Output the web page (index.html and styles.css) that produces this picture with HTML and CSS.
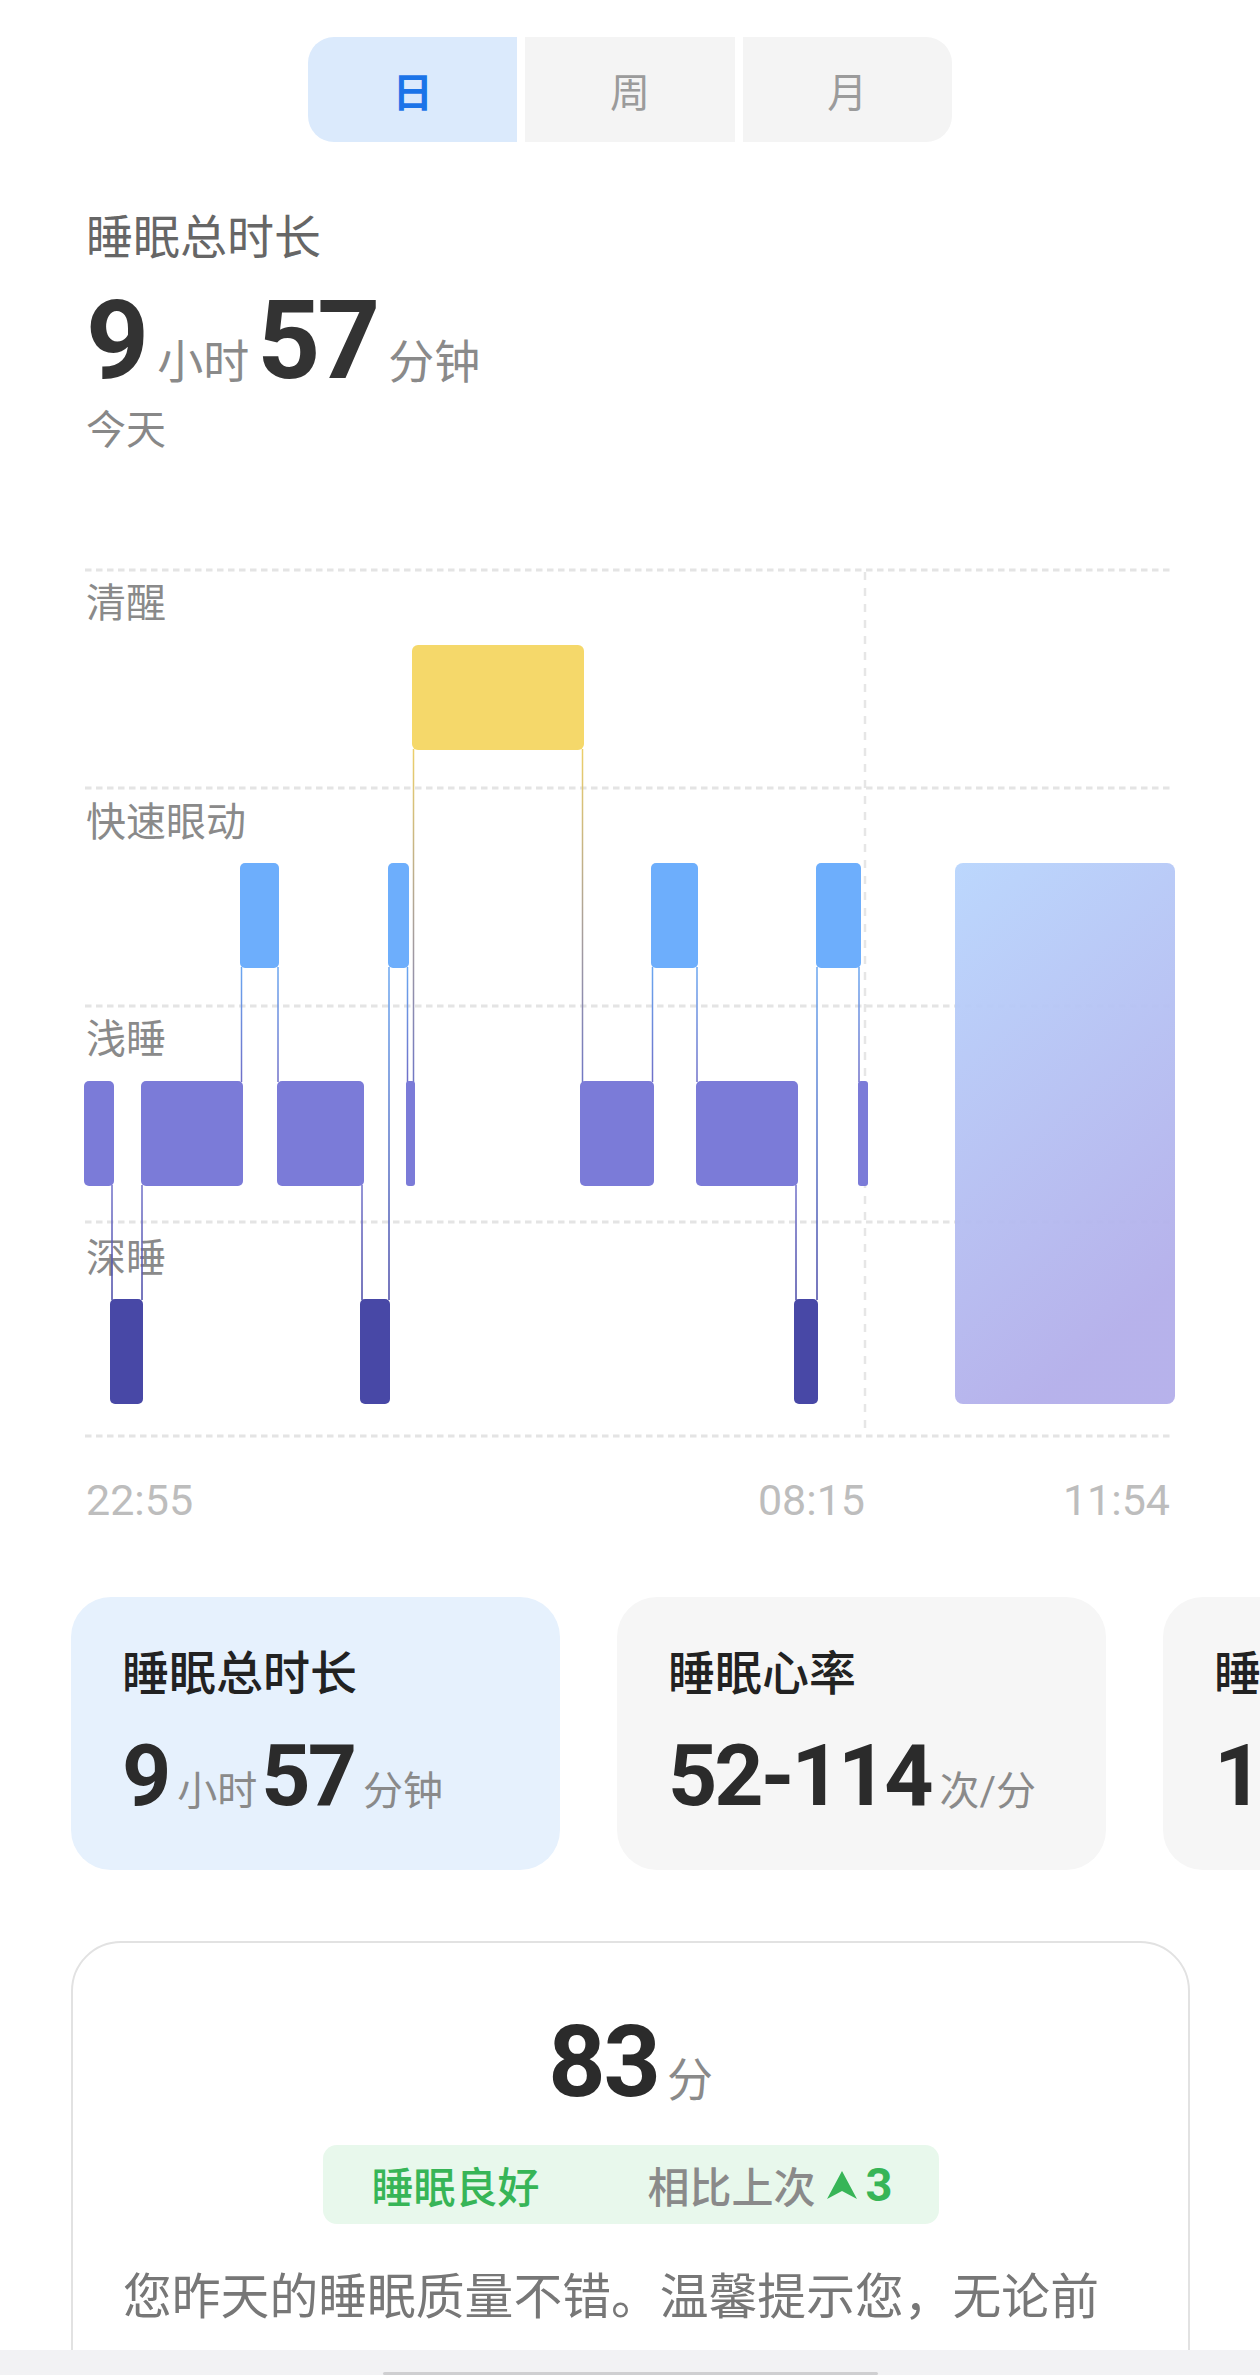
FILE: index.html
```html
<!DOCTYPE html>
<html lang="zh-CN">
<head>
<meta charset="utf-8">
<title>睡眠</title>
<link rel="stylesheet" href="styles.css">
</head>
<body>
<div class="page">
  <div class="tabs">
    <div class="tab active">日</div>
    <div class="tab">周</div>
    <div class="tab">月</div>
  </div>

  <section class="summary">
    <div class="sum-title">睡眠总时长</div>
    <div class="sum-value"><span class="num">9</span><span class="unit">小时</span><span class="num">57</span><span class="unit">分钟</span></div>
    <div class="sum-date">今天</div>
  </section>

  <div class="chart">
    <svg class="chart-svg" width="1260" height="980" viewBox="0 560 1260 980" xmlns="http://www.w3.org/2000/svg">
      <defs>
        <linearGradient id="gAL" gradientUnits="userSpaceOnUse" x1="0" y1="751" x2="0" y2="1082">
          <stop offset="0" stop-color="#eccf6a"/><stop offset="1" stop-color="#7077c4"/>
        </linearGradient>
        <linearGradient id="gRL" gradientUnits="userSpaceOnUse" x1="0" y1="969" x2="0" y2="1082">
          <stop offset="0" stop-color="#6aa6f0"/><stop offset="1" stop-color="#6f6fc8"/>
        </linearGradient>
        <linearGradient id="gLD" gradientUnits="userSpaceOnUse" x1="0" y1="1187" x2="0" y2="1300">
          <stop offset="0" stop-color="#7070c8"/><stop offset="1" stop-color="#4848a6"/>
        </linearGradient>
        <linearGradient id="gRD" gradientUnits="userSpaceOnUse" x1="0" y1="969" x2="0" y2="1300">
          <stop offset="0" stop-color="#6aa6f0"/><stop offset="1" stop-color="#4848a6"/>
        </linearGradient>
        <linearGradient id="gBig" x1="0" y1="0" x2="0.35" y2="1">
          <stop offset="0" stop-color="#b8d5fd"/><stop offset="1" stop-color="#b3aeea"/>
        </linearGradient>
      </defs>

      <g class="grid">
        <line x1="85" y1="571" x2="1170" y2="571"/>
        <line x1="85" y1="789" x2="1170" y2="789"/>
        <line x1="85" y1="1007" x2="1170" y2="1007"/>
        <line x1="85" y1="1223" x2="1170" y2="1223"/>
        <line x1="85" y1="1437" x2="1170" y2="1437"/>
      </g>
      <line class="vline" x1="865" y1="573" x2="865" y2="1432"/>

      <g class="stage-label">
        <text x="86" y="618">清醒</text>
        <text x="86" y="837">快速眼动</text>
        <text x="86" y="1054">浅睡</text>
        <text x="86" y="1273">深睡</text>
      </g>

      <rect class="big" x="955" y="864" width="220" height="541" rx="8"/>

      <g class="conn">
        <line x1="112" y1="1186" x2="112" y2="1301" stroke="url(#gLD)"/>
        <line x1="142" y1="1186" x2="142" y2="1301" stroke="url(#gLD)"/>
        <line x1="241.5" y1="968" x2="241.5" y2="1083" stroke="url(#gRL)"/>
        <line x1="278" y1="968" x2="278" y2="1083" stroke="url(#gRL)"/>
        <line x1="362" y1="1186" x2="362" y2="1301" stroke="url(#gLD)"/>
        <line x1="389" y1="968" x2="389" y2="1301" stroke="url(#gRD)"/>
        <line x1="407.5" y1="968" x2="407.5" y2="1083" stroke="url(#gRL)"/>
        <line x1="413.5" y1="750" x2="413.5" y2="1083" stroke="url(#gAL)"/>
        <line x1="582.5" y1="750" x2="582.5" y2="1083" stroke="url(#gAL)"/>
        <line x1="652.5" y1="968" x2="652.5" y2="1083" stroke="url(#gRL)"/>
        <line x1="697" y1="968" x2="697" y2="1083" stroke="url(#gRL)"/>
        <line x1="796" y1="1186" x2="796" y2="1301" stroke="url(#gLD)"/>
        <line x1="817" y1="968" x2="817" y2="1301" stroke="url(#gRD)"/>
        <line x1="859" y1="968" x2="859" y2="1083" stroke="url(#gRL)"/>
      </g>

      <g class="awake">
        <rect x="412" y="646" width="172" height="105" rx="6"/>
      </g>
      <g class="rem">
        <rect x="240" y="864" width="39" height="105" rx="5"/>
        <rect x="388" y="864" width="21" height="105" rx="5"/>
        <rect x="651" y="864" width="47" height="105" rx="5"/>
        <rect x="816" y="864" width="45" height="105" rx="5"/>
      </g>
      <g class="light">
        <rect x="84" y="1082" width="30" height="105" rx="5"/>
        <rect x="141" y="1082" width="102" height="105" rx="5"/>
        <rect x="277" y="1082" width="87" height="105" rx="5"/>
        <rect x="406" y="1082" width="9" height="105" rx="3"/>
        <rect x="580" y="1082" width="74" height="105" rx="5"/>
        <rect x="696" y="1082" width="102" height="105" rx="5"/>
        <rect x="858" y="1082" width="10" height="105" rx="3"/>
      </g>
      <g class="deep">
        <rect x="110" y="1300" width="33" height="105" rx="5"/>
        <rect x="360" y="1300" width="30" height="105" rx="5"/>
        <rect x="794" y="1300" width="24" height="105" rx="5"/>
      </g>

      <g class="axis">
        <text x="86" y="1516">22:55</text>
        <text x="865" y="1516" text-anchor="end">08:15</text>
        <text x="1170" y="1516" text-anchor="end">11:54</text>
      </g>
    </svg>
  </div>

  <div class="cards">
    <div class="card card-blue">
      <div class="card-title">睡眠总时长</div>
      <div class="card-value"><span class="num">9</span><span class="unit">小时</span><span class="num">57</span><span class="unit">分钟</span></div>
    </div>
    <div class="card card-gray">
      <div class="card-title">睡眠心率</div>
      <div class="card-value"><span class="num">52-114</span><span class="unit">次/分</span></div>
    </div>
    <div class="card card-gray">
      <div class="card-title">睡眠呼吸率</div>
      <div class="card-value"><span class="num">11-16</span><span class="unit">次/分</span></div>
    </div>
  </div>

  <div class="score-card">
    <div class="score"><span class="score-num">83</span><span class="score-unit">分</span></div>
    <div class="badge">
      <span class="badge-good">睡眠良好</span>
      <span class="badge-cmp">相比上次</span>
      <svg class="arrow" width="32" height="30" viewBox="0 0 32 30"><path d="M16 1 L31 29 L16 21 L1 29 Z"/></svg>
      <span class="badge-num">3</span>
    </div>
    <p class="score-text">您昨天的睡眠质量不错。温馨提示您，无论前一天睡得如何，都请保持规律的作息时间，早睡早起。</p>
  </div>
</div>
<div class="navbar"><div class="handle"></div></div>
</body>
</html>
```

FILE: styles.css
```css
* { box-sizing: border-box; }
html, body {
  margin: 0;
  padding: 0;
  background: #ffffff;
}
body {
  width: 1260px;
  overflow: hidden;
  font-family: "Roboto", "Noto Sans CJK SC", sans-serif;
  color: #222;
}
.page {
  width: 1260px;
  padding-bottom: 200px;
}

/* tabs */
.tabs {
  width: 644px;
  height: 105px;
  margin: 37px auto 0;
  display: flex;
  gap: 8px;
  border-radius: 26px;
  overflow: hidden;
}
.tab {
  flex: 1;
  display: flex;
  align-items: center;
  justify-content: center;
  background: #f4f4f4;
  color: #9b9b9b;
  font-size: 40px;
  font-family: "Noto Sans CJK SC", sans-serif;
}
.tab.active {
  background: #dbeafc;
  color: #1b74e8;
  font-weight: 700;
}

/* summary */
.summary {
  padding: 68px 0 0 86px;
}
.sum-title {
  font-size: 47px;
  line-height: 56px;
  color: #666;
}
.sum-value {
  margin-top: 19px;
  font-size: 110px;
  line-height: 112px;
  height: 112px;
  color: #333;
}
.sum-value .num {
  font-weight: 700;
  letter-spacing: -3px;
}
.sum-value .unit {
  font-size: 46px;
  line-height: 1;
  color: #8a8a8a;
  margin: 0 8px 0 11px;
}
.sum-date {
  margin-top: 10px;
  font-size: 40px;
  line-height: 48px;
  color: #888;
}

/* chart */
.chart {
  margin-top: 104px;
  height: 980px;
}
.chart-svg {
  display: block;
}
.grid line {
  stroke: #e4e4e4;
  stroke-width: 3;
  stroke-dasharray: 6.5 4.5;
}
.vline {
  stroke: #e6e6e6;
  stroke-width: 2.5;
  stroke-dasharray: 8 8;
}
.stage-label text {
  font-size: 40px;
  fill: #8a8a8a;
  font-family: "Noto Sans CJK SC", sans-serif;
}
.axis text {
  font-size: 43px;
  fill: #bdbdbd;
  font-family: "Roboto", sans-serif;
}
.conn line {
  stroke-width: 1.5;
}
.awake rect { fill: #f5d86a; }
.rem rect { fill: #6daefc; }
.light rect { fill: #7b7bd8; }
.deep rect { fill: #4848a6; }
.big {
  fill: url(#gBig);
  opacity: 0.95;
}

/* cards */
.cards {
  margin-top: 58px;
  padding-left: 71px;
  display: flex;
  gap: 57px;
  overflow: hidden;
  width: 1260px;
}
.card {
  flex: 0 0 489px;
  height: 273px;
  border-radius: 40px;
  padding: 49px 0 0 51px;
}
.card-blue { background: #e6f1fd; }
.card-gray { background: #f6f6f6; }
.card-title {
  font-size: 47px;
  line-height: 56px;
  color: #222;
  font-weight: 500;
  white-space: nowrap;
}
.card-value {
  margin-top: 31px;
  font-size: 86px;
  line-height: 86px;
  height: 86px;
  color: #2b2b2b;
  white-space: nowrap;
}
.card-value .num {
  font-weight: 700;
  letter-spacing: -3px;
}
.card-value .unit {
  font-size: 40px;
  line-height: 1;
  color: #8a8a8a;
  margin: 0 4px 0 9px;
}

/* score card */
.score-card {
  margin: 71px 0 0 71px;
  width: 1119px;
  height: 600px;
  border: 2px solid #e2e2e2;
  border-radius: 50px;
  padding: 69px 48px 0 48px;
}
.score {
  text-align: center;
  font-size: 100px;
  line-height: 100px;
  height: 100px;
  color: #2b2b2b;
}
.score-num {
  font-weight: 700;
  letter-spacing: -2px;
}
.score-unit {
  font-size: 46px;
  line-height: 1;
  color: #8a8a8a;
  margin-left: 8px;
}
.badge {
  margin: 33px auto 0;
  width: 616px;
  height: 79px;
  background: #e8f8ec;
  border-radius: 14px;
  display: flex;
  align-items: center;
  padding-left: 49px;
  font-size: 42px;
  font-weight: 500;
}
.badge-good {
  color: #37b557;
}
.badge-cmp {
  margin-left: 108px;
  color: #8a8a8a;
}
.arrow {
  margin-left: 10px;
  fill: #37b557;
}
.badge-num {
  margin-left: 8px;
  color: #37b557;
  font-family: "Roboto", sans-serif;
  font-size: 47px;
  font-weight: 700;
}
.score-text {
  margin: 32px 0 0 2px;
  font-size: 48.8px;
  line-height: 84px;
  color: #777;
}

/* system navigation bar */
.navbar {
  position: fixed;
  left: 0;
  right: 0;
  bottom: 0;
  height: 25px;
  background: #f2f2f4;
  display: flex;
  justify-content: center;
  align-items: flex-end;
}
.handle {
  width: 495px;
  height: 3px;
  background: #cfcfd1;
  border-radius: 2px;
}
```
